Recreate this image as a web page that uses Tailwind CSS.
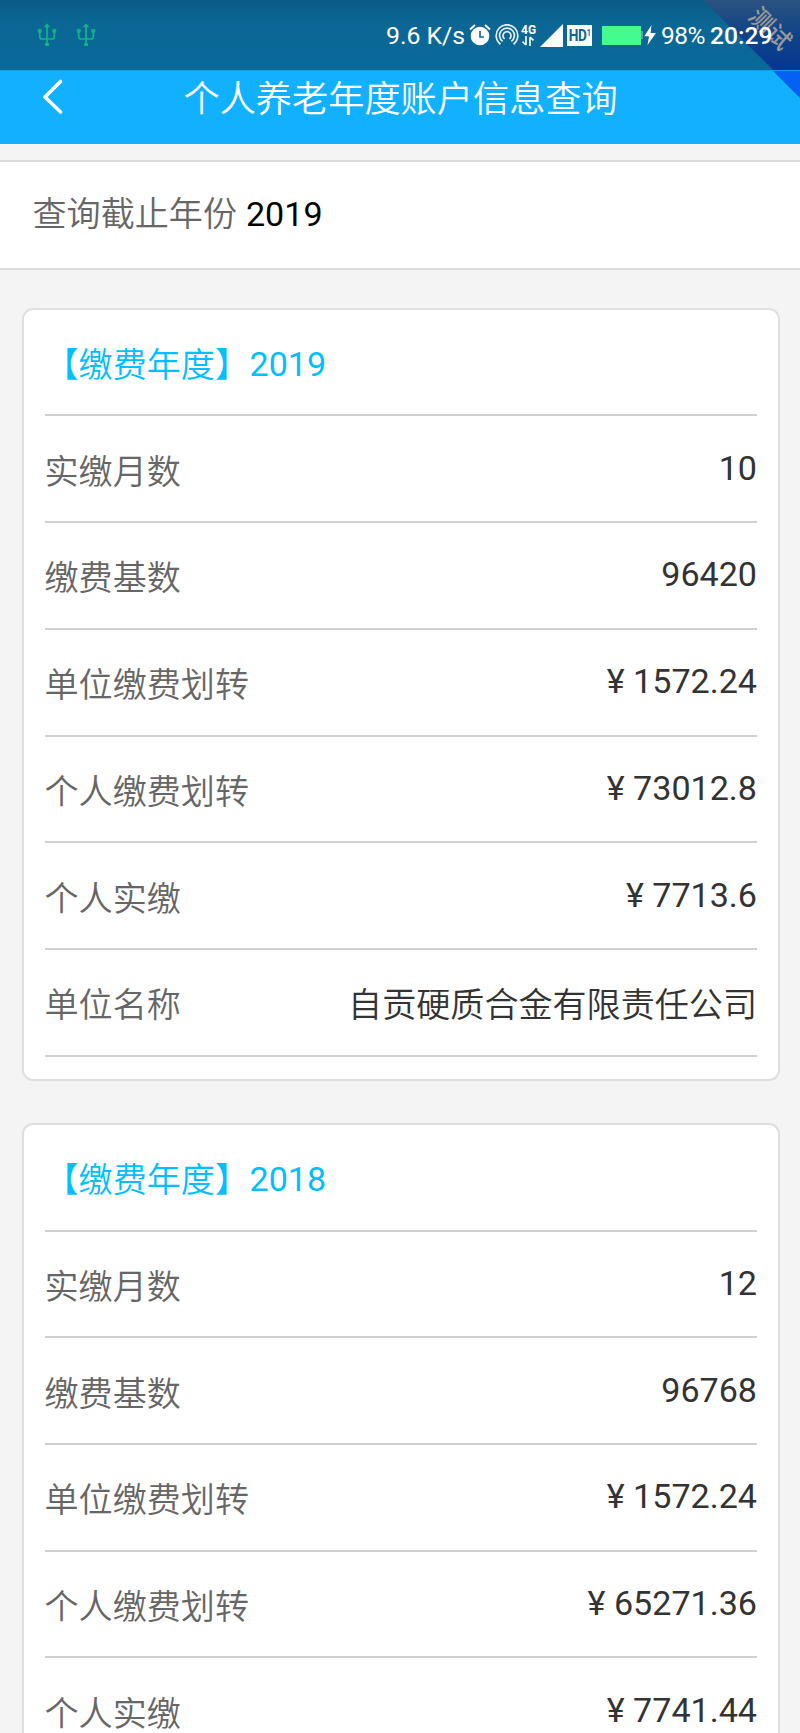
<!DOCTYPE html>
<html lang="zh-CN">
<head>
<meta charset="utf-8">
<title>个人养老年度账户信息查询</title>
<script src="https://cdn.jsdelivr.net/npm/@tailwindcss/browser@4"></script>
</head>
<body class="w-[800px] h-[1733px] overflow-hidden bg-[#f4f4f4] font-['Roboto','Noto_Sans_CJK_SC',sans-serif] text-[34.1px] leading-none font-[370] text-[#333]">
<div class="h-[1733px] overflow-hidden">
  <!-- status bar -->
  <div class="relative h-[70px] bg-linear-to-b from-[#0a5a85] from-0% via-[#0b6694] via-30% to-[#096a99]">
    <svg class="absolute right-0 top-0" width="97" height="70" viewBox="0 0 97 70">
      <defs><linearGradient id="rb" x1="0" y1="0" x2="0" y2="1"><stop offset="0" stop-color="#2a5380"/><stop offset=".5" stop-color="#104288"/><stop offset="1" stop-color="#043893"/></linearGradient></defs>
      <path d="M0 0H97V70H70Z" fill="url(#rb)"/>
    </svg>
    <div class="absolute left-[744px] top-[16px] w-[52px] h-[26px] rotate-45 text-center text-[24px] leading-[26px] font-medium text-[#999]">测试</div>
    <div class="relative flex h-full items-center text-white">
      <svg class="ml-[37px] mb-px" width="20" height="24" viewBox="0 0 20 24" fill="none" stroke="#10b586" stroke-width="1.7"><path d="M10 3V21M2.7 8v5.5q0 2.5 2.5 2.5h9.6q2.5 0 2.5-2.5V8"/><path d="M10 .8l2.4 3H7.6zM1.3 6.4h2.8v2.8H1.3zM15.9 6.4h2.8v2.8h-2.8zM8.5 20.5h3v2h-3z" fill="#10b586" stroke-width="1"/></svg>
      <svg class="ml-[19px] mb-px" width="20" height="24" viewBox="0 0 20 24" fill="none" stroke="#10b586" stroke-width="1.7"><path d="M10 3V21M2.7 8v5.5q0 2.5 2.5 2.5h9.6q2.5 0 2.5-2.5V8"/><path d="M10 .8l2.4 3H7.6zM1.3 6.4h2.8v2.8H1.3zM15.9 6.4h2.8v2.8h-2.8zM8.5 20.5h3v2h-3z" fill="#10b586" stroke-width="1"/></svg>
      <div class="ml-[290px] mt-[2px] w-[80px] whitespace-nowrap text-[24.8px]">9.6 K/s</div>
      <svg class="ml-[3px]" width="22" height="22" viewBox="0 0 22 22"><circle cx="11" cy="12" r="9.3" fill="#fff"/><path d="M1 5.5L6 1M21 5.5L16 1" stroke="#fff" stroke-width="2"/><path d="M11 7v6h4" fill="none" stroke="#0b6694" stroke-width="1.6"/></svg>
      <svg class="ml-[4px]" width="24" height="22" viewBox="0 0 24 22" fill="none" stroke="#e6f0f5" stroke-width="1.7"><path d="M5.5 20.2A10.8 10.8 0 1 1 18.5 20.2M7.6 17.4A7.4 7.4 0 1 1 16.4 17.4M9.6 14.9A4 4 0 1 1 14.4 14.9"/></svg>
      <div class="ml-[2px] flex w-[15px] flex-col">
        <span class="text-[12px] leading-[12px] font-bold">4G</span>
        <svg class="ml-[1px]" width="12" height="10" viewBox="0 0 12 10" fill="none" stroke="#fff" stroke-width="1.6"><path d="M4 0V9M.5 5.5L4 9M8 10V1M11.5 4.5L8 1"/></svg>
      </div>
      <svg class="ml-[4px]" width="23" height="23" viewBox="0 0 23 23"><path d="M23 0V23H0z" fill="#fff"/></svg>
      <div class="ml-[4px] flex h-[21px] w-[25px] items-center justify-center bg-white text-[#0b6694] font-bold"><span class="block scale-x-80 whitespace-nowrap text-[17px] tracking-[-0.3px]">HD<span class="align-[5px] text-[9px]">1</span></span></div>
      <div class="ml-[10px] h-[19px] w-[39px] bg-[#43fb8f]"></div>
      <div class="h-[8px] w-[2px] bg-[#5f9cb8]"></div>
      <svg class="ml-[1px]" width="12" height="20" viewBox="0 0 12 20"><path d="M7.5 0L.3 11.2H5L3.5 20L12 8H6.6z" fill="#fff"/></svg>
      <div class="ml-[5px] mt-[2px] w-[44px] whitespace-nowrap text-[24.5px] tracking-[-0.5px]">98%</div>
      <div class="ml-[5px] mt-[2px] whitespace-nowrap text-[24.6px] font-medium">20:29</div>
    </div>
  </div>
  <!-- title bar -->
  <div class="relative flex h-[74px] items-start bg-[#12b1ff] border-t border-t-[#0e9fe8]">
    <svg class="absolute right-0 top-0" width="27" height="27" viewBox="0 0 27 27"><path d="M0 0H27V27z" fill="#0560f3"/></svg>
    <svg class="ml-[42px] mt-[8px]" width="22" height="36" viewBox="0 0 22 36" fill="none" stroke="#fff" stroke-width="3.6" stroke-linecap="round" stroke-linejoin="round"><path d="M18.5 2.5L3 18L18.5 33"/></svg>
    <h1 class="ml-[119.5px] mt-[11px] whitespace-nowrap text-[36.2px] leading-[36px] font-[350] text-white">个人养老年度账户信息查询</h1>
  </div>
  <!-- year filter -->
  <div class="mt-[16px] flex h-[110px] items-center border-y-2 border-[#dcdcdc] bg-white pl-[32.5px] pb-[2px] text-black"><span class="font-[350] text-[#666]">查询截止年份</span><span class="ml-[9px]">2019</span></div>

  <section class="ml-[22px] mr-[20px] mt-[38px] h-[773px] rounded-[11px] border-2 border-[#dfdfdf] bg-white pl-[20.5px] pr-[21px]">
    <div class="flex h-[106.4px] items-center border-b-2 border-[#d0d0d0] pt-[3px] text-[#00bfff]"><span class="w-[205px] whitespace-nowrap pt-[2px] font-[350]">【缴费年度】</span><span>2019</span></div>
    <div class="flex h-[106.8px] items-center justify-between border-b-2 border-[#d0d0d0]"><span class="pt-[6px] font-[350] text-[#666]">实缴月数</span><span class="pb-[2px]">10</span></div>
    <div class="flex h-[106.7px] items-center justify-between border-b-2 border-[#d0d0d0]"><span class="pt-[6px] font-[350] text-[#666]">缴费基数</span><span class="pb-[2px]">96420</span></div>
    <div class="flex h-[106.7px] items-center justify-between border-b-2 border-[#d0d0d0]"><span class="pt-[6px] font-[350] text-[#666]">单位缴费划转</span><span class="pb-[2px]">¥ 1572.24</span></div>
    <div class="flex h-[106.7px] items-center justify-between border-b-2 border-[#d0d0d0]"><span class="pt-[6px] font-[350] text-[#666]">个人缴费划转</span><span class="pb-[2px]">¥ 73012.8</span></div>
    <div class="flex h-[106.7px] items-center justify-between border-b-2 border-[#d0d0d0]"><span class="pt-[6px] font-[350] text-[#666]">个人实缴</span><span class="pb-[2px]">¥ 7713.6</span></div>
    <div class="flex h-[106.7px] items-center justify-between border-b-2 border-[#d0d0d0]"><span class="pt-[6px] font-[350] text-[#666]">单位名称</span><span class="pt-[6px] font-[350]">自贡硬质合金有限责任公司</span></div>
  </section>

  <section class="ml-[22px] mr-[20px] mt-[42px] h-[773px] rounded-[11px] border-2 border-[#dfdfdf] bg-white pl-[20.5px] pr-[21px]">
    <div class="flex h-[106.6px] items-center border-b-2 border-[#d0d0d0] pt-[3px] text-[#00bfff]"><span class="w-[205px] whitespace-nowrap pt-[2px] font-[350]">【缴费年度】</span><span>2018</span></div>
    <div class="flex h-[106.8px] items-center justify-between border-b-2 border-[#d0d0d0]"><span class="pt-[6px] font-[350] text-[#666]">实缴月数</span><span class="pb-[2px]">12</span></div>
    <div class="flex h-[106.7px] items-center justify-between border-b-2 border-[#d0d0d0]"><span class="pt-[6px] font-[350] text-[#666]">缴费基数</span><span class="pb-[2px]">96768</span></div>
    <div class="flex h-[106.7px] items-center justify-between border-b-2 border-[#d0d0d0]"><span class="pt-[6px] font-[350] text-[#666]">单位缴费划转</span><span class="pb-[2px]">¥ 1572.24</span></div>
    <div class="flex h-[106.7px] items-center justify-between border-b-2 border-[#d0d0d0]"><span class="pt-[6px] font-[350] text-[#666]">个人缴费划转</span><span class="pb-[2px]">¥ 65271.36</span></div>
    <div class="flex h-[106.7px] items-center justify-between border-b-2 border-[#d0d0d0]"><span class="pt-[6px] font-[350] text-[#666]">个人实缴</span><span class="pb-[2px]">¥ 7741.44</span></div>
  </section>
</div>
</body>
</html>
